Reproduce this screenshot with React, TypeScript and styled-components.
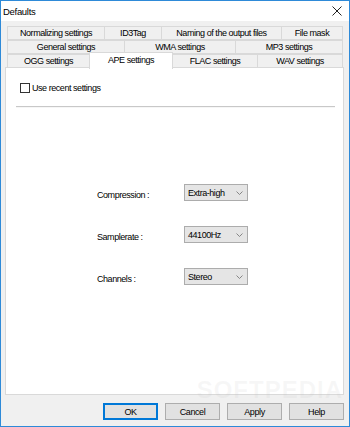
import React from "react";
import styled, { createGlobalStyle } from "styled-components";

const Global = createGlobalStyle`
  html, body { margin: 0; padding: 0; background: #ffffff; }
  * { box-sizing: border-box; }
  body { font-family: "Liberation Sans", Arial, sans-serif; font-size: 9px; color: #000; }
`;

const Window = styled.div`
  width: 350px;
  height: 427px;
  border: 1px solid #2e8ad8;
  background: #f0f0f0;
  display: flex;
  flex-direction: column;
  position: relative;
  overflow: hidden;
`;

const TitleBar = styled.div`
  height: 20px;
  background: #ffffff;
  display: flex;
  align-items: center;
  justify-content: space-between;
  padding: 0 7px 0 2px;
`;

const Title = styled.span`
  font-size: 9.5px;
  letter-spacing: -0.3px;
`;

const Body = styled.div`
  flex: 1;
  display: flex;
  flex-direction: column;
  padding: 5px 5px 0 4px;
`;

const TabRows = styled.div`
  display: flex;
  flex-direction: column;
  margin: 0 1px 0 2px;
`;

const TabRow = styled.div`
  display: flex;
  height: 14px;
`;

const Tab = styled.div<{ $w: number; $active?: boolean }>`
  width: ${(p) => p.$w}px;
  flex: ${(p) => (p.$w ? "none" : "1")};
  height: ${(p) => (p.$active ? 17 : 14)}px;
  margin-top: ${(p) => (p.$active ? -2 : 0)}px;
  margin-left: -1px;
  border: 1px solid #d9d9d9;
  border-bottom: ${(p) => (p.$active ? "none" : "1px solid #d9d9d9")};
  background: ${(p) => (p.$active ? "#ffffff" : "#f0f0f0")};
  display: flex;
  align-items: ${(p) => (p.$active ? "flex-start" : "center")};
  padding-top: ${(p) => (p.$active ? 2 : 0)}px;
  justify-content: center;
  font-size: 9px;
  letter-spacing: -0.45px;
  white-space: nowrap;
  position: relative;
  z-index: ${(p) => (p.$active ? 2 : 1)};
  &:first-child { margin-left: 0; }
`;

const Panel = styled.div`
  height: 328px;
  background: #ffffff;
  border: 1px solid #d9d9d9;
  margin-top: -1px;
  position: relative;
  z-index: 1;
  padding: 14px 8px 0 14px;
  display: flex;
  flex-direction: column;
`;

const CheckRow = styled.label`
  display: flex;
  align-items: center;
  gap: 2px;
  font-size: 9px;
  letter-spacing: -0.45px;
  height: 12px;
`;

const Box = styled.span`
  width: 10px;
  height: 10px;
  border: 1px solid #333333;
  background: #ffffff;
  display: inline-block;
`;

const Separator = styled.div`
  height: 2px;
  margin: 12px 0 0 -4px;
  border-top: 1px solid #c8c8c8;
  border-bottom: 1px solid #f6f6f6;
`;

const Form = styled.div`
  display: grid;
  grid-template-columns: 87px 64px;
  row-gap: 25px;
  margin: 76px 0 0 77px;
`;

const Label = styled.span`
  font-size: 9px;
  letter-spacing: -0.45px;
  display: flex;
  align-items: center;
  padding-top: 4px;
`;

const Select = styled.div`
  height: 17px;
  border: 1px solid #acacac;
  background: #e5e5e5;
  display: flex;
  align-items: center;
  justify-content: space-between;
  padding: 0 4px 0 3px;
  font-size: 9px;
  letter-spacing: -0.45px;
`;

const Watermark = styled.div`
  position: absolute;
  right: 6px;
  bottom: 22px;
  font-size: 24px;
  font-weight: bold;
  letter-spacing: 1px;
  color: rgba(190, 190, 190, 0.12);
  font-family: "Liberation Sans", Arial, sans-serif;
  pointer-events: none;
  z-index: 3;
`;

const ButtonBar = styled.div`
  display: flex;
  justify-content: flex-end;
  gap: 7px;
  margin-top: 8px;
`;

const Button = styled.div<{ $default?: boolean }>`
  width: 55px;
  height: 17px;
  background: #e1e1e1;
  border: 1px solid ${(p) => (p.$default ? "#0078d7" : "#adadad")};
  box-shadow: ${(p) => (p.$default ? "inset 0 0 0 1px #0078d7" : "none")};
  display: flex;
  align-items: center;
  justify-content: center;
  font-size: 9px;
  letter-spacing: -0.4px;
`;

const Chevron = () => (
  <svg width="7" height="4" viewBox="0 0 7 4">
    <path d="M0.5 0.5 L3.5 3.5 L6.5 0.5" fill="none" stroke="#7a7a7a" strokeWidth="0.9" />
  </svg>
);

const CloseIcon = () => (
  <svg width="10" height="10" viewBox="0 0 10 10">
    <path d="M0.5 0.5 L9.5 9.5 M9.5 0.5 L0.5 9.5" stroke="#222" strokeWidth="1" />
  </svg>
);

const rows: { label: string; w: number; active?: boolean }[][] = [
  [
    { label: "Normalizing settings", w: 98 },
    { label: "ID3Tag", w: 58 },
    { label: "Naming of the output files", w: 121 },
    { label: "File mask", w: 0 },
  ],
  [
    { label: "General settings", w: 118 },
    { label: "WMA settings", w: 112 },
    { label: "MP3 settings", w: 0 },
  ],
  [
    { label: "OGG settings", w: 83 },
    { label: "APE settings", w: 84, active: true },
    { label: "FLAC settings", w: 86 },
    { label: "WAV settings", w: 0 },
  ],
];

const fields = [
  { label: "Compression :", value: "Extra-high" },
  { label: "Samplerate :", value: "44100Hz" },
  { label: "Channels :", value: "Stereo" },
];

export default function App() {
  return (
    <>
      <Global />
      <Window>
        <TitleBar>
          <Title>Defaults</Title>
          <CloseIcon />
        </TitleBar>
        <Body>
          <TabRows>
            {rows.map((r, i) => (
              <TabRow key={i}>
                {r.map((t) => (
                  <Tab key={t.label} $w={t.w} $active={t.active}>
                    {t.label}
                  </Tab>
                ))}
              </TabRow>
            ))}
          </TabRows>
          <Panel>
            <CheckRow>
              <Box />
              <span>Use recent settings</span>
            </CheckRow>
            <Separator />
            <Form>
              {fields.map((f) => (
                <React.Fragment key={f.label}>
                  <Label>{f.label}</Label>
                  <Select>
                    <span>{f.value}</span>
                    <Chevron />
                  </Select>
                </React.Fragment>
              ))}
            </Form>
          </Panel>
          <ButtonBar>
            <Button $default>OK</Button>
            <Button>Cancel</Button>
            <Button>Apply</Button>
            <Button>Help</Button>
          </ButtonBar>
        </Body>
        <Watermark>SOFTPEDIA</Watermark>
      </Window>
    </>
  );
}
